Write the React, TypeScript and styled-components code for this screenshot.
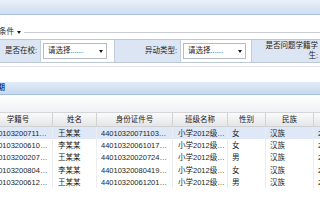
import React from "react";
import styled, { createGlobalStyle } from "styled-components";

const GlobalStyle = createGlobalStyle`
  html, body {
    margin: 0;
    padding: 0;
    background: #ffffff;
  }
  body {
    font-family: "Liberation Sans", "Noto Sans CJK SC", sans-serif;
  }
`;

const Page = styled.div`
  width: 320px;
  height: 214px;
  overflow: hidden;
  background: #ffffff;
  font-size: 7.5px;
  line-height: 10px;
  color: #1e1e1e;
`;

const TopBand = styled.div`
  height: 14px;
  background: linear-gradient(#e9f0f9, #cfdef1);
  border-bottom: 1px solid #a9c0dc;
`;

// the form part of the page is cut off on the left in the picture
const Shifted = styled.div`
  margin-left: -25px;
  width: 400px;
`;

const LegendRow = styled.div`
  display: flex;
  align-items: center;
  gap: 3px;
  height: 24px;
  padding: 10px 0 0 9px;
  box-sizing: border-box;
`;

const LegendText = styled.span`
  white-space: nowrap;
`;

const Caret = styled.span<{ $size?: number }>`
  display: inline-block;
  width: 0;
  height: 0;
  border-left: ${({ $size = 2.5 }) => $size}px solid transparent;
  border-right: ${({ $size = 2.5 }) => $size}px solid transparent;
  border-top: ${({ $size = 2.5 }) => $size + 0.5}px solid #1a1a1a;
`;

const LegendLine = styled.div`
  flex: 1;
  border-top: 1px solid #c9cdd2;
`;

const FormRow = styled.div`
  display: grid;
  grid-template-columns: 66px 74px 66px 71px 70px 1fr;
  height: 24px;
  border-top: 1px solid #bcc8d6;
  border-bottom: 1px solid #bcc8d6;
  box-sizing: border-box;
`;

const Label = styled.div<{ $padLeft?: number }>`
  display: flex;
  align-items: center;
  justify-content: flex-end;
  text-align: right;
  padding: 0 3px 0 ${({ $padLeft = 2 }) => $padLeft}px;
  background: #dbe5f3;
  border-right: 1px solid #c3cedb;
  line-height: 10px;
`;

const Field = styled.div<{ $padRight: number }>`
  display: flex;
  align-items: center;
  padding: 0 ${({ $padRight }) => $padRight}px 0 2px;
  border-right: 1px solid #c3cedb;
`;

const Select = styled.div`
  flex: 1;
  display: flex;
  align-items: center;
  justify-content: space-between;
  height: 16px;
  padding: 0 3px 0 4px;
  box-sizing: border-box;
  border: 1px solid #b6bcc6;
  background: #ffffff;
  white-space: nowrap;
`;

const FormFoot = styled.div`
  height: 16px;
  margin-top: 3px;
  border-top: 1px solid #e0e4ea;
  box-sizing: border-box;
`;

const TitleBar = styled.div`
  display: flex;
  align-items: center;
  height: 13px;
  background: linear-gradient(#e1ebf7, #c7d9ef);
  border-bottom: 1px solid #a8c0e0;
  box-sizing: border-box;
`;

const TitleText = styled.span`
  margin-left: -10px;
  font-weight: bold;
  color: #15428b;
  white-space: nowrap;
`;

const Toolbar = styled.div`
  height: 17px;
  background: linear-gradient(#ffffff, #f0f1f3);
`;

const Grid = styled.div`
  margin-left: -16px;
`;

const columns = "69px 44px 76px 55px 38px 48px 60px";

const HeaderRow = styled.div`
  display: grid;
  grid-template-columns: ${columns};
  height: 15px;
  background: linear-gradient(#fbfbfb, #e4e5e7);
  border-top: 1px solid #d4d6d9;
  border-bottom: 1px solid #cfd1d4;
  box-sizing: border-box;
`;

const HeaderCell = styled.div`
  display: flex;
  align-items: center;
  justify-content: center;
  border-right: 1px solid #d0d2d5;
  color: #222;
  white-space: nowrap;
  overflow: hidden;
`;

const DataRow = styled.div<{ $selected?: boolean }>`
  display: grid;
  grid-template-columns: ${columns};
  height: 12.3px;
  line-height: 9px;
  background: ${({ $selected }) => ($selected ? "#dfe8f6" : "#ffffff")};
`;

const Cell = styled.div<{ $pad?: number }>`
  display: flex;
  align-items: center;
  padding-left: ${({ $pad = 4 }) => $pad}px;
  border-right: 1px solid #ebedef;
  min-width: 0;
  overflow: hidden;
`;

const CellText = styled.span`
  display: block;
  white-space: nowrap;
  overflow: hidden;
  text-overflow: ellipsis;
  padding-right: 2px;
`;

type Student = {
  code: string;
  name: string;
  idNo: string;
  className: string;
  gender: string;
  nation: string;
  date: string;
};

const students: Student[] = [
  { code: "G440103200711030012", name: "王某某", idNo: "440103200711030012", className: "小学2012级1班", gender: "女", nation: "汉族", date: "2012-09-01" },
  { code: "G440103200610170025", name: "李某某", idNo: "440103200610170025", className: "小学2012级1班", gender: "女", nation: "汉族", date: "2012-09-01" },
  { code: "G440103200207240031", name: "王某某", idNo: "440103200207240031", className: "小学2012级2班", gender: "男", nation: "汉族", date: "2012-09-01" },
  { code: "G440103200804190047", name: "李某某", idNo: "440103200804190047", className: "小学2012级2班", gender: "女", nation: "汉族", date: "2012-09-01" },
  { code: "G440103200612010053", name: "王某某", idNo: "440103200612010053", className: "小学2012级3班", gender: "男", nation: "汉族", date: "2012-09-01" },
];

const headers = ["学籍号", "姓名", "身份证件号", "班级名称", "性别", "民族", "入学日期"];

export default function App() {
  return (
    <Page>
      <GlobalStyle />
      <TopBand />
      <Shifted>
        <LegendRow>
          <LegendText>查询条件</LegendText>
          <Caret />
          <LegendLine />
        </LegendRow>
        <FormRow>
          <Label>是否在校:</Label>
          <Field $padRight={7}>
            <Select>
              <span>请选择......</span>
              <Caret />
            </Select>
          </Field>
          <Label>异动类型:</Label>
          <Field $padRight={5}>
            <Select>
              <span>请选择......</span>
              <Caret />
            </Select>
          </Field>
          <Label $padLeft={8}>是否问题学籍学生:</Label>
          <Field $padRight={5} />
        </FormRow>
        <FormFoot />
      </Shifted>
      <TitleBar>
        <TitleText>日期</TitleText>
      </TitleBar>
      <Toolbar />
      <Grid>
        <HeaderRow>
          {headers.map((h) => (
            <HeaderCell key={h}>{h}</HeaderCell>
          ))}
        </HeaderRow>
        {students.map((s, i) => (
          <DataRow key={s.code} $selected={i === 0}>
            <Cell $pad={0}>
              <CellText>{s.code}</CellText>
            </Cell>
            <Cell $pad={5}>
              <CellText>{s.name}</CellText>
            </Cell>
            <Cell>
              <CellText>{s.idNo}</CellText>
            </Cell>
            <Cell $pad={5}>
              <CellText>{s.className}</CellText>
            </Cell>
            <Cell>
              <CellText>{s.gender}</CellText>
            </Cell>
            <Cell>
              <CellText>{s.nation}</CellText>
            </Cell>
            <Cell>
              <CellText>{s.date}</CellText>
            </Cell>
          </DataRow>
        ))}
      </Grid>
    </Page>
  );
}
